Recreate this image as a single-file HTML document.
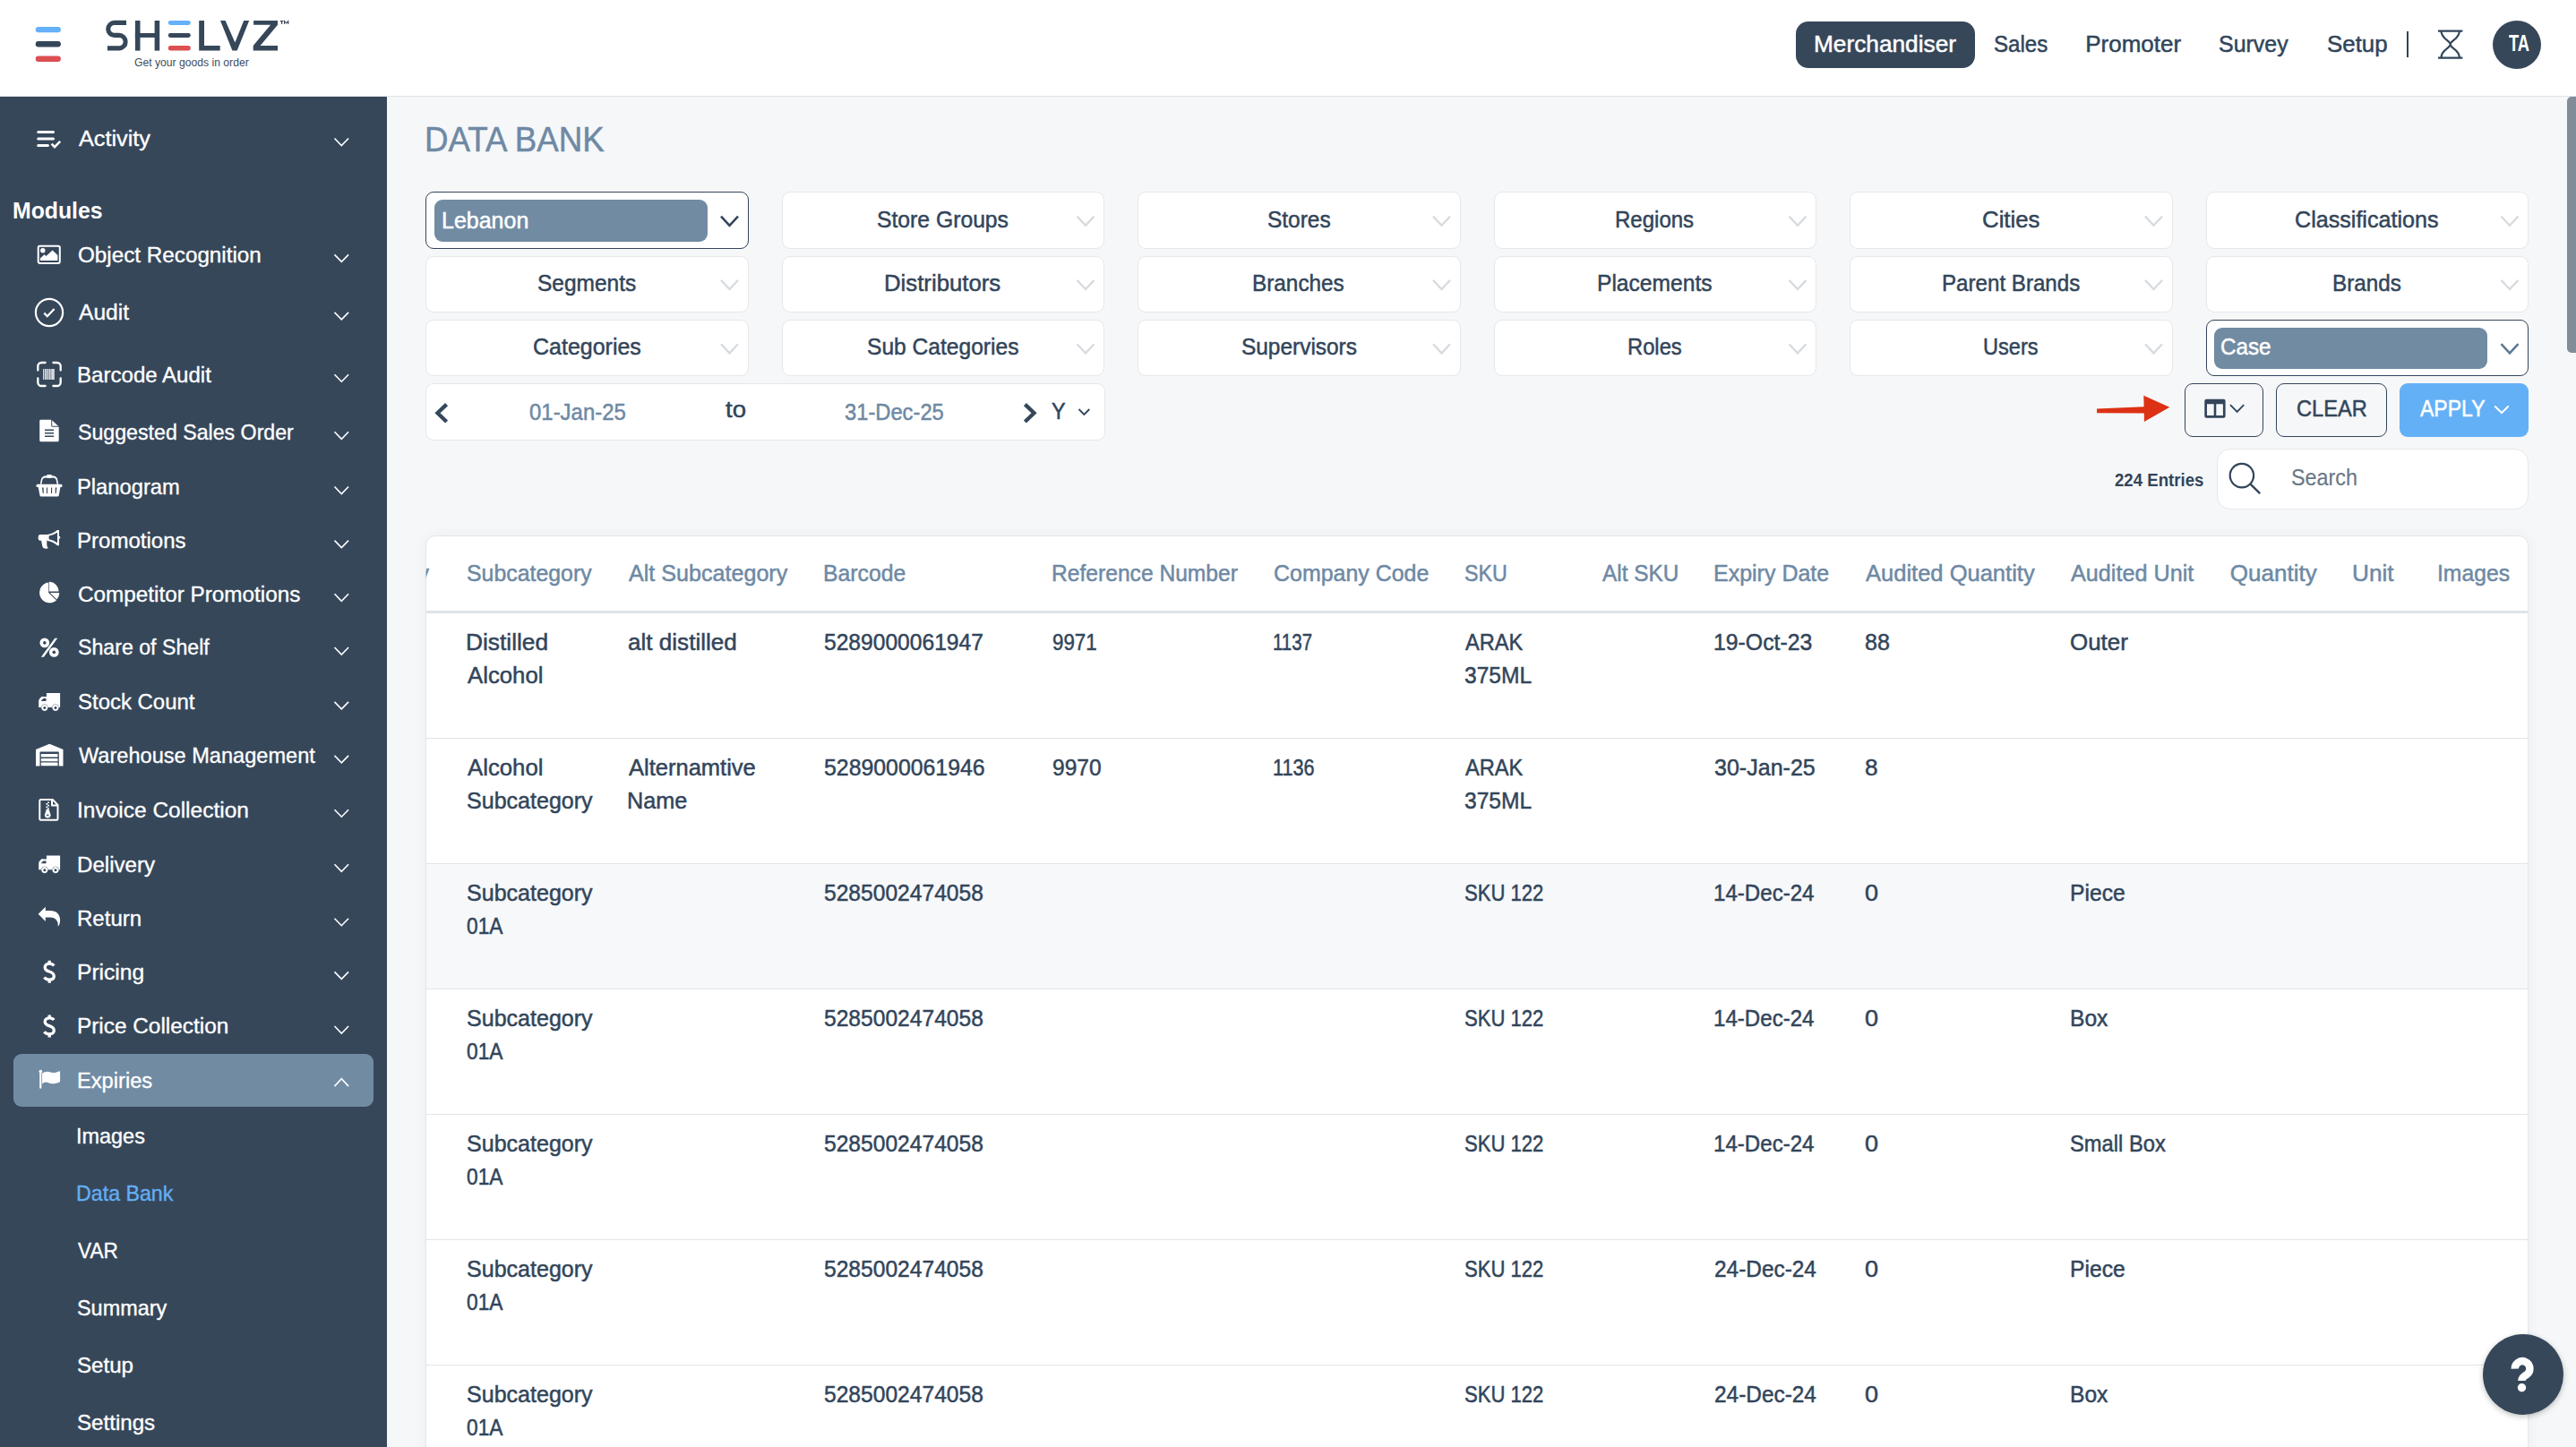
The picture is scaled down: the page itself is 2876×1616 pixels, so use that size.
<!DOCTYPE html>
<html><head><meta charset="utf-8"><style>
html,body{margin:0;padding:0;width:2876px;height:1616px;overflow:hidden;background:#f6f7f9}
.t{position:absolute;white-space:pre;font-family:"Liberation Sans",sans-serif;transform-origin:0 0}
</style></head><body>
<div style="position:absolute;left:0.00px;top:0.00px;width:2876.00px;height:1616.00px;background:#f6f7f9"></div>
<div style="position:absolute;left:0.00px;top:0.00px;width:2876.00px;height:107.00px;background:#ffffff"></div>
<div style="position:absolute;left:0.00px;top:107.00px;width:2876.00px;height:1.00px;background:#e1e4e8"></div>
<div style="position:absolute;left:0.00px;top:108.00px;width:432.00px;height:1508.00px;background:#36475a"></div>
<div style="position:absolute;left:2866.20px;top:108.30px;width:9.80px;height:285.80px;background:#808c98;border-radius:5px 0 0 5px"></div>
<svg style="position:absolute;left:0;top:0" width="340" height="90" viewBox="0 0 340 90">
<rect x="39.7" y="29.9" width="28.2" height="6.4" rx="3.2" fill="#64b0fa"/>
<rect x="39.7" y="46" width="28.2" height="6.5" rx="3.2" fill="#36475a"/>
<rect x="39.7" y="62.4" width="28.2" height="6.6" rx="3.3" fill="#dc4f52"/>
<path d="M141 25.4 H127.75 A7 7 0 0 0 127.75 39.4 H132.9 A7.2 7.2 0 0 1 132.9 53.85 H119.9" fill="none" stroke="#36475a" stroke-width="5.1"/>
<rect x="150.9" y="23" width="5.6" height="33.6" fill="#36475a"/>
<rect x="172.6" y="23" width="5.6" height="33.6" fill="#36475a"/>
<rect x="150.9" y="37" width="27" height="4.9" fill="#36475a"/>
<rect x="187.8" y="23" width="25" height="4.9" rx="2.45" fill="#64b0fa"/>
<rect x="187.8" y="37.1" width="25" height="4.8" rx="2.4" fill="#36475a"/>
<rect x="187.8" y="51.1" width="25" height="5.5" rx="2.75" fill="#dc4f52"/>
<path d="M222.2 23 H228 V51.1 H245.7 V56.6 H222.2 Z" fill="#36475a"/>
<path d="M246 23 L251.6 23 L262.4 47.5 L272.2 23 L278.2 23 L264.7 56.6 L259.4 56.6 Z" fill="#36475a"/>
<path d="M283.1 23 H310 V27.7 L290.6 51.1 H310 V56.6 H282.7 V51.1 L302.1 27.7 H283.1 Z" fill="#36475a"/>
<path d="M312.8 23.6 H316.4 M314.6 23.6 V27 M317.6 27 V23.6 L319.7 25.8 L321.8 23.6 V27" fill="none" stroke="#36475a" stroke-width="1.1"/>
</svg>
<div class="t" style="left:149.99px;top:63.95px;font-size:12px;line-height:12px;color:#3d4c5c;font-weight:400;transform:scaleX(1.0129);">Get your goods in order</div>
<div style="position:absolute;left:2005.00px;top:24.00px;width:199.70px;height:51.50px;background:#36475a;border-radius:14px"></div>
<div class="t" style="left:2024.90px;top:36.40px;font-size:26px;line-height:26px;color:#ffffff;font-weight:400;transform:scaleX(1.0095);-webkit-text-stroke:0.5px #fff;">Merchandiser</div>
<div class="t" style="left:2225.92px;top:36.40px;font-size:26px;line-height:26px;color:#32455a;font-weight:400;transform:scaleX(0.9272);-webkit-text-stroke:0.5px #32455a;">Sales</div>
<div class="t" style="left:2328.22px;top:36.40px;font-size:26px;line-height:26px;color:#32455a;font-weight:400;-webkit-text-stroke:0.5px #32455a;">Promoter</div>
<div class="t" style="left:2477.28px;top:36.40px;font-size:26px;line-height:26px;color:#32455a;font-weight:400;transform:scaleX(0.9592);-webkit-text-stroke:0.5px #32455a;">Survey</div>
<div class="t" style="left:2597.84px;top:36.40px;font-size:26px;line-height:26px;color:#32455a;font-weight:400;transform:scaleX(0.9952);-webkit-text-stroke:0.5px #32455a;">Setup</div>
<div style="position:absolute;left:2686.50px;top:34.80px;width:2.50px;height:28.90px;background:#32455a"></div>
<svg style="position:absolute;left:2716px;top:30px" width="40" height="40" viewBox="2716 30 40 40">
<path d="M2722 34.6 H2749.4 M2722 64.6 H2749.4 M2725.5 34.6 C2725.5 44 2735.7 45 2735.7 49.6 C2735.7 54 2725.5 55 2725.5 64.6 M2745.9 34.6 C2745.9 44 2735.7 45 2735.7 49.6 C2735.7 54 2745.9 55 2745.9 64.6" fill="none" stroke="#32455a" stroke-width="2.2"/>
</svg>
<div style="position:absolute;left:2782.80px;top:23.00px;width:54.00px;height:54.00px;background:#36475a;border-radius:50%"></div>
<div class="t" style="left:2800.82px;top:36.25px;font-size:25px;line-height:25px;color:#ffffff;font-weight:700;transform:scaleX(0.7347);">TA</div>
<div style="position:absolute;left:15.00px;top:1177.40px;width:402.00px;height:58.20px;background:#718ba3;border-radius:9px"></div>
<div class="t" style="left:88.00px;top:142.99px;font-size:24.6px;line-height:24.6px;color:#ffffff;font-weight:400;transform:scaleX(1.0267);-webkit-text-stroke:0.35px #fff;">Activity</div>
<div class="t" style="left:86.91px;top:272.89px;font-size:24.6px;line-height:24.6px;color:#ffffff;font-weight:400;transform:scaleX(0.9856);-webkit-text-stroke:0.35px #fff;">Object Recognition</div>
<div class="t" style="left:88.00px;top:337.39px;font-size:24.6px;line-height:24.6px;color:#ffffff;font-weight:400;-webkit-text-stroke:0.35px #fff;">Audit</div>
<div class="t" style="left:86.07px;top:406.69px;font-size:24.6px;line-height:24.6px;color:#ffffff;font-weight:400;transform:scaleX(0.9788);-webkit-text-stroke:0.35px #fff;">Barcode Audit</div>
<div class="t" style="left:86.96px;top:470.79px;font-size:24.6px;line-height:24.6px;color:#ffffff;font-weight:400;transform:scaleX(0.9420);-webkit-text-stroke:0.35px #fff;">Suggested Sales Order</div>
<div class="t" style="left:86.10px;top:531.99px;font-size:24.6px;line-height:24.6px;color:#ffffff;font-weight:400;transform:scaleX(0.9656);-webkit-text-stroke:0.35px #fff;">Planogram</div>
<div class="t" style="left:86.08px;top:592.09px;font-size:24.6px;line-height:24.6px;color:#ffffff;font-weight:400;transform:scaleX(0.9779);-webkit-text-stroke:0.35px #fff;">Promotions</div>
<div class="t" style="left:86.79px;top:651.79px;font-size:24.6px;line-height:24.6px;color:#ffffff;font-weight:400;transform:scaleX(0.9876);-webkit-text-stroke:0.35px #fff;">Competitor Promotions</div>
<div class="t" style="left:86.96px;top:711.49px;font-size:24.6px;line-height:24.6px;color:#ffffff;font-weight:400;transform:scaleX(0.9415);-webkit-text-stroke:0.35px #fff;">Share of Shelf</div>
<div class="t" style="left:86.92px;top:772.39px;font-size:24.6px;line-height:24.6px;color:#ffffff;font-weight:400;transform:scaleX(0.9738);-webkit-text-stroke:0.35px #fff;">Stock Count</div>
<div class="t" style="left:87.94px;top:832.39px;font-size:24.6px;line-height:24.6px;color:#ffffff;font-weight:400;transform:scaleX(0.9584);-webkit-text-stroke:0.35px #fff;">Warehouse Management</div>
<div class="t" style="left:85.80px;top:892.69px;font-size:24.6px;line-height:24.6px;color:#ffffff;font-weight:400;transform:scaleX(0.9955);-webkit-text-stroke:0.35px #fff;">Invoice Collection</div>
<div class="t" style="left:86.07px;top:953.79px;font-size:24.6px;line-height:24.6px;color:#ffffff;font-weight:400;transform:scaleX(0.9804);-webkit-text-stroke:0.35px #fff;">Delivery</div>
<div class="t" style="left:86.08px;top:1014.19px;font-size:24.6px;line-height:24.6px;color:#ffffff;font-weight:400;transform:scaleX(0.9773);-webkit-text-stroke:0.35px #fff;">Return</div>
<div class="t" style="left:86.03px;top:1073.89px;font-size:24.6px;line-height:24.6px;color:#ffffff;font-weight:400;-webkit-text-stroke:0.35px #fff;">Pricing</div>
<div class="t" style="left:86.05px;top:1134.49px;font-size:24.6px;line-height:24.6px;color:#ffffff;font-weight:400;transform:scaleX(0.9904);-webkit-text-stroke:0.35px #fff;">Price Collection</div>
<div class="t" style="left:86.11px;top:1194.79px;font-size:24.6px;line-height:24.6px;color:#ffffff;font-weight:400;transform:scaleX(0.9624);-webkit-text-stroke:0.35px #fff;">Expiries</div>
<div class="t" style="left:13.89px;top:222.83px;font-size:25.5px;line-height:25.5px;color:#ffffff;font-weight:700;transform:scaleX(0.9723);">Modules</div>
<div class="t" style="left:84.79px;top:1258.17px;font-size:23.2px;line-height:23.2px;color:#ffffff;font-weight:400;transform:scaleX(1.0110);-webkit-text-stroke:0.35px #ffffff;">Images</div>
<div class="t" style="left:85.05px;top:1321.77px;font-size:23.2px;line-height:23.2px;color:#64aef4;font-weight:400;-webkit-text-stroke:0.35px #64aef4;">Data Bank</div>
<div class="t" style="left:86.84px;top:1386.07px;font-size:23.2px;line-height:23.2px;color:#ffffff;font-weight:400;transform:scaleX(0.9734);-webkit-text-stroke:0.35px #ffffff;">VAR</div>
<div class="t" style="left:85.85px;top:1450.07px;font-size:23.2px;line-height:23.2px;color:#ffffff;font-weight:400;transform:scaleX(1.0102);-webkit-text-stroke:0.35px #ffffff;">Summary</div>
<div class="t" style="left:85.81px;top:1513.77px;font-size:23.2px;line-height:23.2px;color:#ffffff;font-weight:400;transform:scaleX(1.0403);-webkit-text-stroke:0.35px #ffffff;">Setup</div>
<div class="t" style="left:85.81px;top:1578.27px;font-size:23.2px;line-height:23.2px;color:#ffffff;font-weight:400;transform:scaleX(1.0396);-webkit-text-stroke:0.35px #ffffff;">Settings</div>
<svg style="position:absolute;left:0;top:0" width="432" height="1616"><g fill="none" stroke="#fff" stroke-width="1.6"><path d="M373.5 154.5 L381.3 162.5 L389.1 154.5"/><path d="M373.5 284.4 L381.3 292.4 L389.1 284.4"/><path d="M373.5 348.9 L381.3 356.9 L389.1 348.9"/><path d="M373.5 418.2 L381.3 426.2 L389.1 418.2"/><path d="M373.5 482.3 L381.3 490.3 L389.1 482.3"/><path d="M373.5 543.5 L381.3 551.5 L389.1 543.5"/><path d="M373.5 603.6 L381.3 611.6 L389.1 603.6"/><path d="M373.5 663.3 L381.3 671.3 L389.1 663.3"/><path d="M373.5 723.0 L381.3 731.0 L389.1 723.0"/><path d="M373.5 783.9 L381.3 791.9 L389.1 783.9"/><path d="M373.5 843.9 L381.3 851.9 L389.1 843.9"/><path d="M373.5 904.2 L381.3 912.2 L389.1 904.2"/><path d="M373.5 965.3 L381.3 973.3 L389.1 965.3"/><path d="M373.5 1025.7 L381.3 1033.7 L389.1 1025.7"/><path d="M373.5 1085.4 L381.3 1093.4 L389.1 1085.4"/><path d="M373.5 1146.0 L381.3 1154.0 L389.1 1146.0"/><path d="M373.5 1213.1 L381.3 1204.6 L389.1 1213.1"/></g></svg>
<svg style="position:absolute;left:0;top:0" width="432" height="1616">
<g fill="none" stroke="#ffffff" stroke-linecap="round">
 <path d="M42.7 147.6 H59.5 M42.7 155 H59.5 M42.7 162.5 H53.4" stroke-width="3"/>
 <path d="M57.6 160.6 L61 164.2 L67.2 157.8" stroke-width="2.6" stroke-linecap="butt"/>
 <rect x="42.7" y="274.7" width="24.1" height="19.2" rx="1.8" stroke-width="2"/>
 <circle cx="55" cy="349" r="15.1" stroke-width="2.2"/>
 <path d="M49.3 349.6 L52.8 353.2 L60.6 345" stroke-width="2.3" stroke-linecap="butt"/>
 <path d="M42.3 413.5 V409 A4 4 0 0 1 46.3 405 H50.6 M59.4 405 H63.7 A4 4 0 0 1 67.7 409 V413.5 M67.7 422.5 V427 A4 4 0 0 1 63.7 431 H59.4 M50.6 431 H46.3 A4 4 0 0 1 42.3 427 V422.5" stroke-width="2.3"/>
 <path d="M45.5 893 H58.8 L64.5 899 V914.5 A1.2 1.2 0 0 1 63.3 915.7 H45.5 A1.2 1.2 0 0 1 44.3 914.5 V894.2 A1.2 1.2 0 0 1 45.5 893 Z M58 893.5 V899.4 H64" stroke-width="2" stroke-linecap="butt" stroke-linejoin="round"/>
 <path d="M56.2 1020.7 Q66 1021 66 1029 Q66 1032 64.7 1034.8" stroke-width="0"/>
</g>
<g fill="#ffffff">
 <circle cx="47.8" cy="279.8" r="2.7"/>
 <path d="M44.9 288.4 L49.6 284.2 L51.5 285.9 L58.6 279.6 L64.4 284.9 V290.9 H44.9 Z"/>
 <rect x="48" y="412" width="1.3" height="12" opacity="0.8"/><rect x="50.2" y="412" width="1.4" height="12"/><rect x="52.2" y="412" width="2.4" height="12" opacity="0.7"/><rect x="55.2" y="412" width="1.3" height="12"/><rect x="57.2" y="412" width="3.6" height="12" opacity="0.8"/>
 <path d="M45.2 468.8 H57.2 V475.2 A1.6 1.6 0 0 0 58.8 476.8 H65.7 V491.8 A1.6 1.6 0 0 1 64.1 493.3 H45.8 A1.6 1.6 0 0 1 44.2 491.7 V470 A1.2 1.2 0 0 1 45.2 468.8 Z M50 479.6 V481 H60 V479.6 Z M50 483.1 V484.5 H60 V483.1 Z M50 486.6 V488 H60 V486.6 Z" fill-rule="evenodd"/>
 <path d="M58.2 469.6 L65 475.8 H58.2 Z"/>
 <path d="M52.4 530 H57.6 V531.2 Q63 531 64.1 535 L65.2 540.8 H63.6 L62.6 535.8 Q61.8 533.2 57.6 533.6 V534 H52.4 V533.6 Q48.2 533.2 47.4 535.8 L46.4 540.8 H44.8 L45.9 535 Q47 531 52.4 531.2 Z"/>
 <path d="M42 540.8 H68 A1.6 1.6 0 0 1 68 544 H67.4 L65.7 553.4 A1.4 1.4 0 0 1 64.3 554.5 H45.9 A1.4 1.4 0 0 1 44.5 553.4 L42.7 544 H42 A1.6 1.6 0 0 1 42 540.8 Z M47 544.4 L47.8 551 H48.8 L48.6 544.4 Z M51.9 544.4 V551 H53 V544.4 Z M57 544.4 V551 H58.1 V544.4 Z M61.8 544.4 L61.6 551 H62.6 L63.4 544.4 Z" fill-rule="evenodd"/>
 <path d="M44.6 597 H52.9 V603.7 H52.3 V608 Q52.3 611 54 612 Q53.5 612.8 50 612.6 Q47.5 612.3 47 608.5 L46.1 603.7 H44.6 A2.2 2.2 0 0 1 42.7 601.5 V599.2 A2.2 2.2 0 0 1 44.6 597 Z"/>
 <path d="M52.9 596.8 Q58 596.5 64 592 H66 V599 H67.1 V601.6 H66 V609.2 H64 Q58 604.2 52.9 604 Z M54.6 598.5 V602.3 Q59 602.8 64 606.3 V594.8 Q59 598.2 54.6 598.5 Z" fill-rule="evenodd"/>
 <path d="M54.2 650.4 V661.9 L63 670.6 A11.5 11.5 0 1 1 54.2 650.4 Z"/>
 <path d="M54.8 649.8 A10.7 10.7 0 0 1 65.5 660.5 H54.8 Z"/>
 <path d="M55.8 662.1 H66.3 A11 11 0 0 1 63.4 669.6 Z"/>
 <circle cx="49.8" cy="717.9" r="5.35"/><circle cx="60.3" cy="728.4" r="5.35"/>
 <path d="M61.2 712.8 H64.2 L48.9 733.7 H45.9 Z"/>
 <path d="M40 837.1 L55.3 830.8 L70.5 837.1 V855.5 H65.8 V840.2 A0.6 0.6 0 0 0 65.2 839.6 H45.1 A0.6 0.6 0 0 0 44.5 840.2 V855.5 H40 Z"/>
 <rect x="45.8" y="841.9" width="18.7" height="3.6" rx="0.4"/><rect x="45.8" y="846.9" width="18.7" height="3.4" rx="0.4"/><rect x="45.8" y="851.6" width="18.7" height="3.7" rx="0.6"/>
 <path d="M53.2 895.5 H55 V897 H53.2 Z M51.4 897 H53.2 V898.8 H51.4 Z M53.2 898.8 H55 V900.5 H53.2 Z M51.4 900.5 H53.2 V902.2 H51.4 Z M53.2 902.2 H55 V903.6 H53.2 Z"/>
 <path d="M52 903.5 H54.5 L56.6 910 A3.4 3.4 0 1 1 49.8 910 Z"/>
 <path d="M42.7 1020.7 L50.8 1012.8 V1017 H55.5 Q67.1 1017 67.1 1028.5 Q67.1 1032.5 64.7 1034.9 Q65.5 1024.4 55.5 1024.4 H50.8 V1028.9 Z"/>
 <path d="M47.1 1198.6 Q51 1195.8 55.5 1197.2 Q59.5 1198.6 63 1197.4 Q65.2 1196.6 67.1 1196.2 V1208.3 Q64 1209.6 60.5 1210.2 Q56.5 1210.6 53.5 1209 Q50 1207.6 47.1 1210.4 Z"/>
 <rect x="44.2" y="1196.5" width="2.1" height="19.2" rx="1"/><circle cx="45.3" cy="1196.6" r="1.8"/>
</g>
<g fill="#36475a">
 <circle cx="49.8" cy="717.9" r="1.8"/><circle cx="60.3" cy="728.4" r="1.8"/>
 <ellipse cx="53.2" cy="910.3" rx="1.5" ry="0.8"/>
</g>
</svg>
<svg style="position:absolute;left:0;top:0" width="432" height="1616"><g fill="#ffffff">
<path d="M51.9 774.1 H67.1 V790.0 H65.6 A3.6 3.6 0 0 0 58.4 790.0 H53.4 A3.6 3.6 0 0 0 46.2 790.0 H43.2 V783.1 Q43.2 781.3000000000001 44.4 779.9 L46.8 777.7 Q47.6 778.1 49 778.1 H51.9 Z M45.6 783.0 H51.5 V780.1 H48.4 Z" fill-rule="evenodd"/>
<path d="M49.8 786.8000000000001 A3.6 3.6 0 1 1 49.79 786.8000000000001 Z M49.8 788.9 A1.5 1.5 0 1 0 49.81 788.9 Z" fill-rule="evenodd"/>
<path d="M62 786.8000000000001 A3.6 3.6 0 1 1 61.99 786.8000000000001 Z M62 788.9 A1.5 1.5 0 1 0 62.01 788.9 Z" fill-rule="evenodd"/>
</g></svg>
<svg style="position:absolute;left:0;top:0" width="432" height="1616"><g fill="#ffffff">
<path d="M51.9 955.4 H67.1 V971.3 H65.6 A3.6 3.6 0 0 0 58.4 971.3 H53.4 A3.6 3.6 0 0 0 46.2 971.3 H43.2 V964.4 Q43.2 962.6 44.4 961.1999999999999 L46.8 959.0 Q47.6 959.4 49 959.4 H51.9 Z M45.6 964.3 H51.5 V961.4 H48.4 Z" fill-rule="evenodd"/>
<path d="M49.8 968.1 A3.6 3.6 0 1 1 49.79 968.1 Z M49.8 970.1999999999999 A1.5 1.5 0 1 0 49.81 970.1999999999999 Z" fill-rule="evenodd"/>
<path d="M62 968.1 A3.6 3.6 0 1 1 61.99 968.1 Z M62 970.1999999999999 A1.5 1.5 0 1 0 62.01 970.1999999999999 Z" fill-rule="evenodd"/>
</g></svg>
<svg style="position:absolute;left:0;top:0" width="432" height="1616"><g fill="none" stroke="#ffffff" stroke-width="3.3">
<path d="M60.3 1078.3999999999999 Q58.5 1076.1 55.2 1076.2 Q50.2 1076.3999999999999 50.2 1080.6 Q50.3 1083.6 55 1085.0 Q60.3 1086.6 60.3 1090.3999999999999 Q60.1 1094.1 55 1094.2 Q51.5 1094.2 49.5 1091.6"/>
<path d="M55.2 1072.8 V1076.3999999999999 M55.2 1094.0 V1097.8"/>
</g></svg>
<svg style="position:absolute;left:0;top:0" width="432" height="1616"><g fill="none" stroke="#ffffff" stroke-width="3.3">
<path d="M60.3 1139.0 Q58.5 1136.7 55.2 1136.8000000000002 Q50.2 1137.0 50.2 1141.2 Q50.3 1144.2 55 1145.6000000000001 Q60.3 1147.2 60.3 1151.0 Q60.1 1154.7 55 1154.8000000000002 Q51.5 1154.8000000000002 49.5 1152.2"/>
<path d="M55.2 1133.4 V1137.0 M55.2 1154.6000000000001 V1158.4"/>
</g></svg>
<div class="t" style="left:473.66px;top:136.31px;font-size:39px;line-height:39px;color:#6e89a4;font-weight:400;transform:scaleX(0.9417);-webkit-text-stroke:0.5px #6e89a4;">DATA BANK</div>
<div style="position:absolute;left:475.00px;top:214.40px;width:360.80px;height:63.30px;box-sizing:border-box;background:#fff;border:1.6px solid #32455a;border-radius:9px"></div>
<div style="position:absolute;left:872.50px;top:214.40px;width:360.80px;height:63.30px;box-sizing:border-box;background:#fff;border:1.5px solid #e5e8eb;border-radius:9px"></div>
<div class="t" style="left:979.29px;top:231.80px;font-size:26px;line-height:26px;color:#32455a;font-weight:400;transform:scaleX(0.9505);-webkit-text-stroke:0.5px #32455a;">Store Groups</div>
<div style="position:absolute;left:1270.00px;top:214.40px;width:360.80px;height:63.30px;box-sizing:border-box;background:#fff;border:1.5px solid #e5e8eb;border-radius:9px"></div>
<div class="t" style="left:1414.95px;top:231.80px;font-size:26px;line-height:26px;color:#32455a;font-weight:400;transform:scaleX(0.9403);-webkit-text-stroke:0.5px #32455a;">Stores</div>
<div style="position:absolute;left:1667.50px;top:214.40px;width:360.80px;height:63.30px;box-sizing:border-box;background:#fff;border:1.5px solid #e5e8eb;border-radius:9px"></div>
<div class="t" style="left:1803.28px;top:231.80px;font-size:26px;line-height:26px;color:#32455a;font-weight:400;transform:scaleX(0.9239);-webkit-text-stroke:0.5px #32455a;">Regions</div>
<div style="position:absolute;left:2065.00px;top:214.40px;width:360.80px;height:63.30px;box-sizing:border-box;background:#fff;border:1.5px solid #e5e8eb;border-radius:9px"></div>
<div class="t" style="left:2212.96px;top:231.80px;font-size:26px;line-height:26px;color:#32455a;font-weight:400;transform:scaleX(0.9922);-webkit-text-stroke:0.5px #32455a;">Cities</div>
<div style="position:absolute;left:2462.50px;top:214.40px;width:360.80px;height:63.30px;box-sizing:border-box;background:#fff;border:1.5px solid #e5e8eb;border-radius:9px"></div>
<div class="t" style="left:2562.44px;top:231.80px;font-size:26px;line-height:26px;color:#32455a;font-weight:400;transform:scaleX(0.9659);-webkit-text-stroke:0.5px #32455a;">Classifications</div>
<div style="position:absolute;left:475.00px;top:285.70px;width:360.80px;height:63.30px;box-sizing:border-box;background:#fff;border:1.5px solid #e5e8eb;border-radius:9px"></div>
<div class="t" style="left:600.15px;top:303.10px;font-size:26px;line-height:26px;color:#32455a;font-weight:400;transform:scaleX(0.9419);-webkit-text-stroke:0.5px #32455a;">Segments</div>
<div style="position:absolute;left:872.50px;top:285.70px;width:360.80px;height:63.30px;box-sizing:border-box;background:#fff;border:1.5px solid #e5e8eb;border-radius:9px"></div>
<div class="t" style="left:987.19px;top:303.10px;font-size:26px;line-height:26px;color:#32455a;font-weight:400;transform:scaleX(0.9906);-webkit-text-stroke:0.5px #32455a;">Distributors</div>
<div style="position:absolute;left:1270.00px;top:285.70px;width:360.80px;height:63.30px;box-sizing:border-box;background:#fff;border:1.5px solid #e5e8eb;border-radius:9px"></div>
<div class="t" style="left:1398.45px;top:303.10px;font-size:26px;line-height:26px;color:#32455a;font-weight:400;transform:scaleX(0.9358);-webkit-text-stroke:0.5px #32455a;">Branches</div>
<div style="position:absolute;left:1667.50px;top:285.70px;width:360.80px;height:63.30px;box-sizing:border-box;background:#fff;border:1.5px solid #e5e8eb;border-radius:9px"></div>
<div class="t" style="left:1783.08px;top:303.10px;font-size:26px;line-height:26px;color:#32455a;font-weight:400;transform:scaleX(0.9461);-webkit-text-stroke:0.5px #32455a;">Placements</div>
<div style="position:absolute;left:2065.00px;top:285.70px;width:360.80px;height:63.30px;box-sizing:border-box;background:#fff;border:1.5px solid #e5e8eb;border-radius:9px"></div>
<div class="t" style="left:2167.72px;top:303.10px;font-size:26px;line-height:26px;color:#32455a;font-weight:400;transform:scaleX(0.9282);-webkit-text-stroke:0.5px #32455a;">Parent Brands</div>
<div style="position:absolute;left:2462.50px;top:285.70px;width:360.80px;height:63.30px;box-sizing:border-box;background:#fff;border:1.5px solid #e5e8eb;border-radius:9px"></div>
<div class="t" style="left:2603.96px;top:303.10px;font-size:26px;line-height:26px;color:#32455a;font-weight:400;transform:scaleX(0.9324);-webkit-text-stroke:0.5px #32455a;">Brands</div>
<div style="position:absolute;left:475.00px;top:357.00px;width:360.80px;height:63.30px;box-sizing:border-box;background:#fff;border:1.5px solid #e5e8eb;border-radius:9px"></div>
<div class="t" style="left:594.80px;top:374.40px;font-size:26px;line-height:26px;color:#32455a;font-weight:400;transform:scaleX(0.9611);-webkit-text-stroke:0.5px #32455a;">Categories</div>
<div style="position:absolute;left:872.50px;top:357.00px;width:360.80px;height:63.30px;box-sizing:border-box;background:#fff;border:1.5px solid #e5e8eb;border-radius:9px"></div>
<div class="t" style="left:968.04px;top:374.40px;font-size:26px;line-height:26px;color:#32455a;font-weight:400;transform:scaleX(0.9457);-webkit-text-stroke:0.5px #32455a;">Sub Categories</div>
<div style="position:absolute;left:1270.00px;top:357.00px;width:360.80px;height:63.30px;box-sizing:border-box;background:#fff;border:1.5px solid #e5e8eb;border-radius:9px"></div>
<div class="t" style="left:1385.80px;top:374.40px;font-size:26px;line-height:26px;color:#32455a;font-weight:400;transform:scaleX(0.9393);-webkit-text-stroke:0.5px #32455a;">Supervisors</div>
<div style="position:absolute;left:1667.50px;top:357.00px;width:360.80px;height:63.30px;box-sizing:border-box;background:#fff;border:1.5px solid #e5e8eb;border-radius:9px"></div>
<div class="t" style="left:1817.00px;top:374.40px;font-size:26px;line-height:26px;color:#32455a;font-weight:400;transform:scaleX(0.9133);-webkit-text-stroke:0.5px #32455a;">Roles</div>
<div style="position:absolute;left:2065.00px;top:357.00px;width:360.80px;height:63.30px;box-sizing:border-box;background:#fff;border:1.5px solid #e5e8eb;border-radius:9px"></div>
<div class="t" style="left:2214.13px;top:374.40px;font-size:26px;line-height:26px;color:#32455a;font-weight:400;transform:scaleX(0.9068);-webkit-text-stroke:0.5px #32455a;">Users</div>
<div style="position:absolute;left:2462.50px;top:357.00px;width:360.80px;height:63.30px;box-sizing:border-box;background:#fff;border:1.6px solid #32455a;border-radius:9px"></div>
<div style="position:absolute;left:485.20px;top:222.80px;width:304.60px;height:46.80px;background:#718ba3;border-radius:9px"></div>
<div class="t" style="left:493.00px;top:232.60px;font-size:26px;line-height:26px;color:#ffffff;font-weight:400;transform:scaleX(0.9610);-webkit-text-stroke:0.5px #fff;">Lebanon</div>
<div style="position:absolute;left:2472.30px;top:365.50px;width:304.40px;height:46.10px;background:#718ba3;border-radius:9px"></div>
<div class="t" style="left:2479.49px;top:374.30px;font-size:26px;line-height:26px;color:#ffffff;font-weight:400;transform:scaleX(0.9323);-webkit-text-stroke:0.5px #fff;">Case</div>
<div style="position:absolute;left:475.00px;top:428.00px;width:758.60px;height:63.50px;box-sizing:border-box;background:#fff;border:1.5px solid #e5e8eb;border-radius:9px"></div>
<div class="t" style="left:590.90px;top:446.60px;font-size:26px;line-height:26px;color:#6e89a4;font-weight:400;transform:scaleX(0.9213);-webkit-text-stroke:0.5px #6e89a4;">01-Jan-25</div>
<div class="t" style="left:810.39px;top:444.30px;font-size:26px;line-height:26px;color:#32455a;font-weight:400;transform:scaleX(1.0586);-webkit-text-stroke:0.5px #32455a;">to</div>
<div class="t" style="left:943.01px;top:446.60px;font-size:26px;line-height:26px;color:#6e89a4;font-weight:400;transform:scaleX(0.9125);-webkit-text-stroke:0.5px #6e89a4;">31-Dec-25</div>
<div class="t" style="left:1174.03px;top:446.55px;font-size:25px;line-height:25px;color:#32455a;font-weight:400;transform:scaleX(0.9344);-webkit-text-stroke:0.5px #32455a;">Y</div>
<div style="position:absolute;left:2438.50px;top:428.20px;width:88.30px;height:59.70px;box-sizing:border-box;border:1.5px solid #32455a;border-radius:9px;background:transparent"></div>
<div style="position:absolute;left:2541.40px;top:428.20px;width:123.30px;height:59.70px;box-sizing:border-box;border:1.5px solid #32455a;border-radius:9px;background:transparent"></div>
<div class="t" style="left:2563.62px;top:444.35px;font-size:25px;line-height:25px;color:#32455a;font-weight:400;transform:scaleX(0.9457);-webkit-text-stroke:0.5px #32455a;">CLEAR</div>
<div style="position:absolute;left:2679.30px;top:428.20px;width:143.50px;height:59.70px;background:#64b0f6;border-radius:9px"></div>
<div class="t" style="left:2702.00px;top:444.35px;font-size:25px;line-height:25px;color:#ffffff;font-weight:400;transform:scaleX(0.9209);-webkit-text-stroke:0.5px #fff;">APPLY</div>
<svg style="position:absolute;left:0;top:0" width="2876" height="620"><g fill="#32455a">
<path d="M2463.3 445.7 H2482.6 A2 2 0 0 1 2484.6 447.7 V464.8 A2 2 0 0 1 2482.6 466.8 H2463.3 A2 2 0 0 1 2461.3 464.8 V447.7 A2 2 0 0 1 2463.3 445.7 Z M2464 451.2 V464 H2471.7 V451.2 Z M2474.3 451.2 V464 H2481.9 V451.2 Z" fill-rule="evenodd"/>
</g>
<g fill="#dc3114"><path d="M2341 456.6 L2393.6 454.2 L2393.3 441.8 L2422.3 454.8 L2393.9 471 L2393.8 461.5 L2341.2 461.2 Z"/></g>
<g fill="none" stroke-linecap="butt" stroke-linejoin="miter"><path d="M805.0 241.6 L814.5 251.8 L824.0 241.6" stroke="#32455a" stroke-width="2.6"/><path d="M1202.5 241.6 L1212.0 251.8 L1221.5 241.6" stroke="#d8dce0" stroke-width="2.4"/><path d="M1600.0 241.6 L1609.5 251.8 L1619.0 241.6" stroke="#d8dce0" stroke-width="2.4"/><path d="M1997.5 241.6 L2007.0 251.8 L2016.5 241.6" stroke="#d8dce0" stroke-width="2.4"/><path d="M2395.0 241.6 L2404.5 251.8 L2414.0 241.6" stroke="#d8dce0" stroke-width="2.4"/><path d="M2792.5 241.6 L2802.0 251.8 L2811.5 241.6" stroke="#d8dce0" stroke-width="2.4"/><path d="M805.0 312.9 L814.5 323.1 L824.0 312.9" stroke="#d8dce0" stroke-width="2.4"/><path d="M1202.5 312.9 L1212.0 323.1 L1221.5 312.9" stroke="#d8dce0" stroke-width="2.4"/><path d="M1600.0 312.9 L1609.5 323.1 L1619.0 312.9" stroke="#d8dce0" stroke-width="2.4"/><path d="M1997.5 312.9 L2007.0 323.1 L2016.5 312.9" stroke="#d8dce0" stroke-width="2.4"/><path d="M2395.0 312.9 L2404.5 323.1 L2414.0 312.9" stroke="#d8dce0" stroke-width="2.4"/><path d="M2792.5 312.9 L2802.0 323.1 L2811.5 312.9" stroke="#d8dce0" stroke-width="2.4"/><path d="M805.0 384.2 L814.5 394.4 L824.0 384.2" stroke="#d8dce0" stroke-width="2.4"/><path d="M1202.5 384.2 L1212.0 394.4 L1221.5 384.2" stroke="#d8dce0" stroke-width="2.4"/><path d="M1600.0 384.2 L1609.5 394.4 L1619.0 384.2" stroke="#d8dce0" stroke-width="2.4"/><path d="M1997.5 384.2 L2007.0 394.4 L2016.5 384.2" stroke="#d8dce0" stroke-width="2.4"/><path d="M2395.0 384.2 L2404.5 394.4 L2414.0 384.2" stroke="#d8dce0" stroke-width="2.4"/><path d="M2792.5 384.2 L2802.0 394.4 L2811.5 384.2" stroke="#5d7892" stroke-width="2.6"/><path d="M498.6 451.6 L488.5 461.3 L498.6 471" stroke="#34475c" stroke-width="4.3"/><path d="M1144.4 451.6 L1154.5 461.3 L1144.4 471" stroke="#34475c" stroke-width="4.3"/><path d="M1204.5 457 L1210.4 463 L1216.3 457" stroke="#32455a" stroke-width="1.8"/><path d="M2785.3 453.5 L2793 461 L2800.7 453.5" stroke="#ffffff" stroke-width="2"/><path d="M2490 452.2 L2497.6 460 L2505.2 452.2" stroke="#32455a" stroke-width="1.9"/></g>
</svg>
<div class="t" style="left:2360.70px;top:526.08px;font-size:20px;line-height:20px;color:#32455a;font-weight:700;transform:scaleX(0.9307);">224 Entries</div>
<div style="position:absolute;left:2474.90px;top:500.80px;width:347.90px;height:68.50px;box-sizing:border-box;background:#fff;border:1.5px solid #e5e8eb;border-radius:15px"></div>
<svg style="position:absolute;left:2480px;top:508px" width="60" height="60" viewBox="2480 508 60 60">
<circle cx="2502.9" cy="531.1" r="13.2" fill="none" stroke="#32455a" stroke-width="2.2"/>
<path d="M2512.5 540.7 L2523.2 551.2" stroke="#32455a" stroke-width="2.4"/>
</svg>
<div class="t" style="left:2557.55px;top:521.25px;font-size:25px;line-height:25px;color:#6b7785;font-weight:400;transform:scaleX(0.9333);-webkit-text-stroke:0.15px #6b7785;">Search</div>
<div style="position:absolute;left:474.60px;top:598.10px;width:2348.70px;height:1056.90px;box-sizing:border-box;background:#fff;border:1px solid #e4e7ea;border-radius:11px;box-shadow:0 0 14px rgba(40,60,80,0.05)"></div>
<div style="position:absolute;left:0;top:0;width:2876px;height:1616px;clip-path:inset(599.1px 53.69999999999982px 0px 475.6px round 11px 11px 0 0)">
<div style="position:absolute;left:475.60px;top:964.50px;width:2346.70px;height:140.00px;background:#f7f8fa"></div>
<div style="position:absolute;left:475.60px;top:682.40px;width:2346.70px;height:2.80px;background:#e0e4e7"></div>
<div style="position:absolute;left:475.60px;top:824.00px;width:2346.70px;height:1.00px;background:#e1e5e8"></div>
<div style="position:absolute;left:475.60px;top:964.00px;width:2346.70px;height:1.00px;background:#e1e5e8"></div>
<div style="position:absolute;left:475.60px;top:1104.00px;width:2346.70px;height:1.00px;background:#e1e5e8"></div>
<div style="position:absolute;left:475.60px;top:1244.00px;width:2346.70px;height:1.00px;background:#e1e5e8"></div>
<div style="position:absolute;left:475.60px;top:1384.00px;width:2346.70px;height:1.00px;background:#e1e5e8"></div>
<div style="position:absolute;left:475.60px;top:1524.00px;width:2346.70px;height:1.00px;background:#e1e5e8"></div>
<div class="t" style="left:465.94px;top:627.10px;font-size:26px;line-height:26px;color:#6e89a4;font-weight:400;-webkit-text-stroke:0.5px #6e89a4;">y</div>
<div class="t" style="left:520.98px;top:627.10px;font-size:26px;line-height:26px;color:#6e89a4;font-weight:400;transform:scaleX(0.9564);-webkit-text-stroke:0.5px #6e89a4;">Subcategory</div>
<div class="t" style="left:702.00px;top:627.10px;font-size:26px;line-height:26px;color:#6e89a4;font-weight:400;transform:scaleX(0.9659);-webkit-text-stroke:0.5px #6e89a4;">Alt Subcategory</div>
<div class="t" style="left:918.72px;top:627.10px;font-size:26px;line-height:26px;color:#6e89a4;font-weight:400;transform:scaleX(0.9519);-webkit-text-stroke:0.5px #6e89a4;">Barcode</div>
<div class="t" style="left:1173.63px;top:627.10px;font-size:26px;line-height:26px;color:#6e89a4;font-weight:400;transform:scaleX(0.9467);-webkit-text-stroke:0.5px #6e89a4;">Reference Number</div>
<div class="t" style="left:1421.75px;top:627.10px;font-size:26px;line-height:26px;color:#6e89a4;font-weight:400;transform:scaleX(0.9594);-webkit-text-stroke:0.5px #6e89a4;">Company Code</div>
<div class="t" style="left:1634.65px;top:627.10px;font-size:26px;line-height:26px;color:#6e89a4;font-weight:400;transform:scaleX(0.8953);-webkit-text-stroke:0.5px #6e89a4;">SKU</div>
<div class="t" style="left:1789.30px;top:627.10px;font-size:26px;line-height:26px;color:#6e89a4;font-weight:400;transform:scaleX(0.9370);-webkit-text-stroke:0.5px #6e89a4;">Alt SKU</div>
<div class="t" style="left:1913.20px;top:627.10px;font-size:26px;line-height:26px;color:#6e89a4;font-weight:400;transform:scaleX(0.9613);-webkit-text-stroke:0.5px #6e89a4;">Expiry Date</div>
<div class="t" style="left:2082.60px;top:627.10px;font-size:26px;line-height:26px;color:#6e89a4;font-weight:400;transform:scaleX(0.9814);-webkit-text-stroke:0.5px #6e89a4;">Audited Quantity</div>
<div class="t" style="left:2312.30px;top:627.10px;font-size:26px;line-height:26px;color:#6e89a4;font-weight:400;transform:scaleX(0.9696);-webkit-text-stroke:0.5px #6e89a4;">Audited Unit</div>
<div class="t" style="left:2489.83px;top:627.10px;font-size:26px;line-height:26px;color:#6e89a4;font-weight:400;-webkit-text-stroke:0.5px #6e89a4;">Quantity</div>
<div class="t" style="left:2625.53px;top:627.10px;font-size:26px;line-height:26px;color:#6e89a4;font-weight:400;transform:scaleX(1.0083);-webkit-text-stroke:0.5px #6e89a4;">Unit</div>
<div class="t" style="left:2720.77px;top:627.10px;font-size:26px;line-height:26px;color:#6e89a4;font-weight:400;transform:scaleX(0.9509);-webkit-text-stroke:0.5px #6e89a4;">Images</div>
<div class="t" style="left:520.00px;top:703.90px;font-size:26px;line-height:26px;color:#32455a;font-weight:400;transform:scaleX(1.0115);-webkit-text-stroke:0.5px #32455a;">Distilled</div>
<div class="t" style="left:522.10px;top:741.10px;font-size:26px;line-height:26px;color:#32455a;font-weight:400;transform:scaleX(0.9905);-webkit-text-stroke:0.5px #32455a;">Alcohol</div>
<div class="t" style="left:700.89px;top:703.90px;font-size:26px;line-height:26px;color:#32455a;font-weight:400;transform:scaleX(1.0032);-webkit-text-stroke:0.5px #32455a;">alt distilled</div>
<div class="t" style="left:919.52px;top:703.90px;font-size:26px;line-height:26px;color:#32455a;font-weight:400;transform:scaleX(0.9461);-webkit-text-stroke:0.5px #32455a;">5289000061947</div>
<div class="t" style="left:1174.60px;top:703.90px;font-size:26px;line-height:26px;color:#32455a;font-weight:400;transform:scaleX(0.8577);-webkit-text-stroke:0.5px #32455a;">9971</div>
<div class="t" style="left:1421.46px;top:703.90px;font-size:26px;line-height:26px;color:#32455a;font-weight:400;transform:scaleX(0.7873);-webkit-text-stroke:0.5px #32455a;">1137</div>
<div class="t" style="left:1635.70px;top:703.90px;font-size:26px;line-height:26px;color:#32455a;font-weight:400;transform:scaleX(0.9089);-webkit-text-stroke:0.5px #32455a;">ARAK</div>
<div class="t" style="left:1634.78px;top:741.10px;font-size:26px;line-height:26px;color:#32455a;font-weight:400;transform:scaleX(0.9455);-webkit-text-stroke:0.5px #32455a;">375ML</div>
<div class="t" style="left:1913.14px;top:703.90px;font-size:26px;line-height:26px;color:#32455a;font-weight:400;transform:scaleX(0.9545);-webkit-text-stroke:0.5px #32455a;">19-Oct-23</div>
<div class="t" style="left:2081.73px;top:703.90px;font-size:26px;line-height:26px;color:#32455a;font-weight:400;transform:scaleX(0.9657);-webkit-text-stroke:0.5px #32455a;">88</div>
<div class="t" style="left:2311.33px;top:703.90px;font-size:26px;line-height:26px;color:#32455a;font-weight:400;transform:scaleX(0.9978);-webkit-text-stroke:0.5px #32455a;">Outer</div>
<div class="t" style="left:522.10px;top:843.90px;font-size:26px;line-height:26px;color:#32455a;font-weight:400;transform:scaleX(0.9905);-webkit-text-stroke:0.5px #32455a;">Alcohol</div>
<div class="t" style="left:520.97px;top:881.10px;font-size:26px;line-height:26px;color:#32455a;font-weight:400;transform:scaleX(0.9633);-webkit-text-stroke:0.5px #32455a;">Subcategory</div>
<div class="t" style="left:702.00px;top:843.90px;font-size:26px;line-height:26px;color:#32455a;font-weight:400;transform:scaleX(0.9812);-webkit-text-stroke:0.5px #32455a;">Alternamtive</div>
<div class="t" style="left:699.98px;top:881.10px;font-size:26px;line-height:26px;color:#32455a;font-weight:400;transform:scaleX(0.9717);-webkit-text-stroke:0.5px #32455a;">Name</div>
<div class="t" style="left:919.51px;top:843.90px;font-size:26px;line-height:26px;color:#32455a;font-weight:400;transform:scaleX(0.9557);-webkit-text-stroke:0.5px #32455a;">5289000061946</div>
<div class="t" style="left:1174.50px;top:843.90px;font-size:26px;line-height:26px;color:#32455a;font-weight:400;transform:scaleX(0.9436);-webkit-text-stroke:0.5px #32455a;">9970</div>
<div class="t" style="left:1421.38px;top:843.90px;font-size:26px;line-height:26px;color:#32455a;font-weight:400;transform:scaleX(0.8326);-webkit-text-stroke:0.5px #32455a;">1136</div>
<div class="t" style="left:1635.70px;top:843.90px;font-size:26px;line-height:26px;color:#32455a;font-weight:400;transform:scaleX(0.9089);-webkit-text-stroke:0.5px #32455a;">ARAK</div>
<div class="t" style="left:1634.78px;top:881.10px;font-size:26px;line-height:26px;color:#32455a;font-weight:400;transform:scaleX(0.9455);-webkit-text-stroke:0.5px #32455a;">375ML</div>
<div class="t" style="left:1914.06px;top:843.90px;font-size:26px;line-height:26px;color:#32455a;font-weight:400;transform:scaleX(0.9631);-webkit-text-stroke:0.5px #32455a;">30-Jan-25</div>
<div class="t" style="left:2081.68px;top:843.90px;font-size:26px;line-height:26px;color:#32455a;font-weight:400;transform:scaleX(1.0094);-webkit-text-stroke:0.5px #32455a;">8</div>
<div class="t" style="left:520.97px;top:983.90px;font-size:26px;line-height:26px;color:#32455a;font-weight:400;transform:scaleX(0.9633);-webkit-text-stroke:0.5px #32455a;">Subcategory</div>
<div class="t" style="left:521.25px;top:1021.10px;font-size:26px;line-height:26px;color:#32455a;font-weight:400;transform:scaleX(0.8753);-webkit-text-stroke:0.5px #32455a;">01A</div>
<div class="t" style="left:919.52px;top:983.90px;font-size:26px;line-height:26px;color:#32455a;font-weight:400;transform:scaleX(0.9462);-webkit-text-stroke:0.5px #32455a;">5285002474058</div>
<div class="t" style="left:1634.71px;top:983.90px;font-size:26px;line-height:26px;color:#32455a;font-weight:400;transform:scaleX(0.8489);-webkit-text-stroke:0.5px #32455a;">SKU 122</div>
<div class="t" style="left:1913.19px;top:983.90px;font-size:26px;line-height:26px;color:#32455a;font-weight:400;transform:scaleX(0.9268);-webkit-text-stroke:0.5px #32455a;">14-Dec-24</div>
<div class="t" style="left:2081.78px;top:983.90px;font-size:26px;line-height:26px;color:#32455a;font-weight:400;transform:scaleX(1.0417);-webkit-text-stroke:0.5px #32455a;">0</div>
<div class="t" style="left:2310.52px;top:983.90px;font-size:26px;line-height:26px;color:#32455a;font-weight:400;transform:scaleX(0.9496);-webkit-text-stroke:0.5px #32455a;">Piece</div>
<div class="t" style="left:520.97px;top:1123.90px;font-size:26px;line-height:26px;color:#32455a;font-weight:400;transform:scaleX(0.9633);-webkit-text-stroke:0.5px #32455a;">Subcategory</div>
<div class="t" style="left:521.25px;top:1161.10px;font-size:26px;line-height:26px;color:#32455a;font-weight:400;transform:scaleX(0.8753);-webkit-text-stroke:0.5px #32455a;">01A</div>
<div class="t" style="left:919.52px;top:1123.90px;font-size:26px;line-height:26px;color:#32455a;font-weight:400;transform:scaleX(0.9462);-webkit-text-stroke:0.5px #32455a;">5285002474058</div>
<div class="t" style="left:1634.71px;top:1123.90px;font-size:26px;line-height:26px;color:#32455a;font-weight:400;transform:scaleX(0.8489);-webkit-text-stroke:0.5px #32455a;">SKU 122</div>
<div class="t" style="left:1913.19px;top:1123.90px;font-size:26px;line-height:26px;color:#32455a;font-weight:400;transform:scaleX(0.9268);-webkit-text-stroke:0.5px #32455a;">14-Dec-24</div>
<div class="t" style="left:2081.78px;top:1123.90px;font-size:26px;line-height:26px;color:#32455a;font-weight:400;transform:scaleX(1.0417);-webkit-text-stroke:0.5px #32455a;">0</div>
<div class="t" style="left:2310.53px;top:1123.90px;font-size:26px;line-height:26px;color:#32455a;font-weight:400;transform:scaleX(0.9471);-webkit-text-stroke:0.5px #32455a;">Box</div>
<div class="t" style="left:520.97px;top:1263.90px;font-size:26px;line-height:26px;color:#32455a;font-weight:400;transform:scaleX(0.9633);-webkit-text-stroke:0.5px #32455a;">Subcategory</div>
<div class="t" style="left:521.25px;top:1301.10px;font-size:26px;line-height:26px;color:#32455a;font-weight:400;transform:scaleX(0.8753);-webkit-text-stroke:0.5px #32455a;">01A</div>
<div class="t" style="left:919.52px;top:1263.90px;font-size:26px;line-height:26px;color:#32455a;font-weight:400;transform:scaleX(0.9462);-webkit-text-stroke:0.5px #32455a;">5285002474058</div>
<div class="t" style="left:1634.71px;top:1263.90px;font-size:26px;line-height:26px;color:#32455a;font-weight:400;transform:scaleX(0.8489);-webkit-text-stroke:0.5px #32455a;">SKU 122</div>
<div class="t" style="left:1913.19px;top:1263.90px;font-size:26px;line-height:26px;color:#32455a;font-weight:400;transform:scaleX(0.9268);-webkit-text-stroke:0.5px #32455a;">14-Dec-24</div>
<div class="t" style="left:2081.78px;top:1263.90px;font-size:26px;line-height:26px;color:#32455a;font-weight:400;transform:scaleX(1.0417);-webkit-text-stroke:0.5px #32455a;">0</div>
<div class="t" style="left:2311.43px;top:1263.90px;font-size:26px;line-height:26px;color:#32455a;font-weight:400;transform:scaleX(0.9124);-webkit-text-stroke:0.5px #32455a;">Small Box</div>
<div class="t" style="left:520.97px;top:1403.90px;font-size:26px;line-height:26px;color:#32455a;font-weight:400;transform:scaleX(0.9633);-webkit-text-stroke:0.5px #32455a;">Subcategory</div>
<div class="t" style="left:521.25px;top:1441.10px;font-size:26px;line-height:26px;color:#32455a;font-weight:400;transform:scaleX(0.8753);-webkit-text-stroke:0.5px #32455a;">01A</div>
<div class="t" style="left:919.52px;top:1403.90px;font-size:26px;line-height:26px;color:#32455a;font-weight:400;transform:scaleX(0.9462);-webkit-text-stroke:0.5px #32455a;">5285002474058</div>
<div class="t" style="left:1634.71px;top:1403.90px;font-size:26px;line-height:26px;color:#32455a;font-weight:400;transform:scaleX(0.8489);-webkit-text-stroke:0.5px #32455a;">SKU 122</div>
<div class="t" style="left:1913.78px;top:1403.90px;font-size:26px;line-height:26px;color:#32455a;font-weight:400;transform:scaleX(0.9385);-webkit-text-stroke:0.5px #32455a;">24-Dec-24</div>
<div class="t" style="left:2081.78px;top:1403.90px;font-size:26px;line-height:26px;color:#32455a;font-weight:400;transform:scaleX(1.0417);-webkit-text-stroke:0.5px #32455a;">0</div>
<div class="t" style="left:2310.52px;top:1403.90px;font-size:26px;line-height:26px;color:#32455a;font-weight:400;transform:scaleX(0.9496);-webkit-text-stroke:0.5px #32455a;">Piece</div>
<div class="t" style="left:520.97px;top:1543.90px;font-size:26px;line-height:26px;color:#32455a;font-weight:400;transform:scaleX(0.9633);-webkit-text-stroke:0.5px #32455a;">Subcategory</div>
<div class="t" style="left:521.25px;top:1581.10px;font-size:26px;line-height:26px;color:#32455a;font-weight:400;transform:scaleX(0.8753);-webkit-text-stroke:0.5px #32455a;">01A</div>
<div class="t" style="left:919.52px;top:1543.90px;font-size:26px;line-height:26px;color:#32455a;font-weight:400;transform:scaleX(0.9462);-webkit-text-stroke:0.5px #32455a;">5285002474058</div>
<div class="t" style="left:1634.71px;top:1543.90px;font-size:26px;line-height:26px;color:#32455a;font-weight:400;transform:scaleX(0.8489);-webkit-text-stroke:0.5px #32455a;">SKU 122</div>
<div class="t" style="left:1913.78px;top:1543.90px;font-size:26px;line-height:26px;color:#32455a;font-weight:400;transform:scaleX(0.9385);-webkit-text-stroke:0.5px #32455a;">24-Dec-24</div>
<div class="t" style="left:2081.78px;top:1543.90px;font-size:26px;line-height:26px;color:#32455a;font-weight:400;transform:scaleX(1.0417);-webkit-text-stroke:0.5px #32455a;">0</div>
<div class="t" style="left:2310.53px;top:1543.90px;font-size:26px;line-height:26px;color:#32455a;font-weight:400;transform:scaleX(0.9471);-webkit-text-stroke:0.5px #32455a;">Box</div>
</div>
<div style="position:absolute;left:2771.80px;top:1490.00px;width:90.00px;height:90.00px;background:#36475a;border-radius:50%;box-shadow:0 2px 6px rgba(0,0,0,0.25)"></div>
<svg style="position:absolute;left:2790px;top:1505px" width="55" height="60" viewBox="2790 1505 55 60">
<path d="M2807.8 1528.6 A8.3 8.3 0 1 1 2821.2 1535 Q2815.4 1538 2815.4 1542" fill="none" stroke="#fff" stroke-width="8.4" stroke-linecap="butt"/>
<circle cx="2815.5" cy="1549.8" r="4.7" fill="#fff"/>
</svg>
</body></html>
